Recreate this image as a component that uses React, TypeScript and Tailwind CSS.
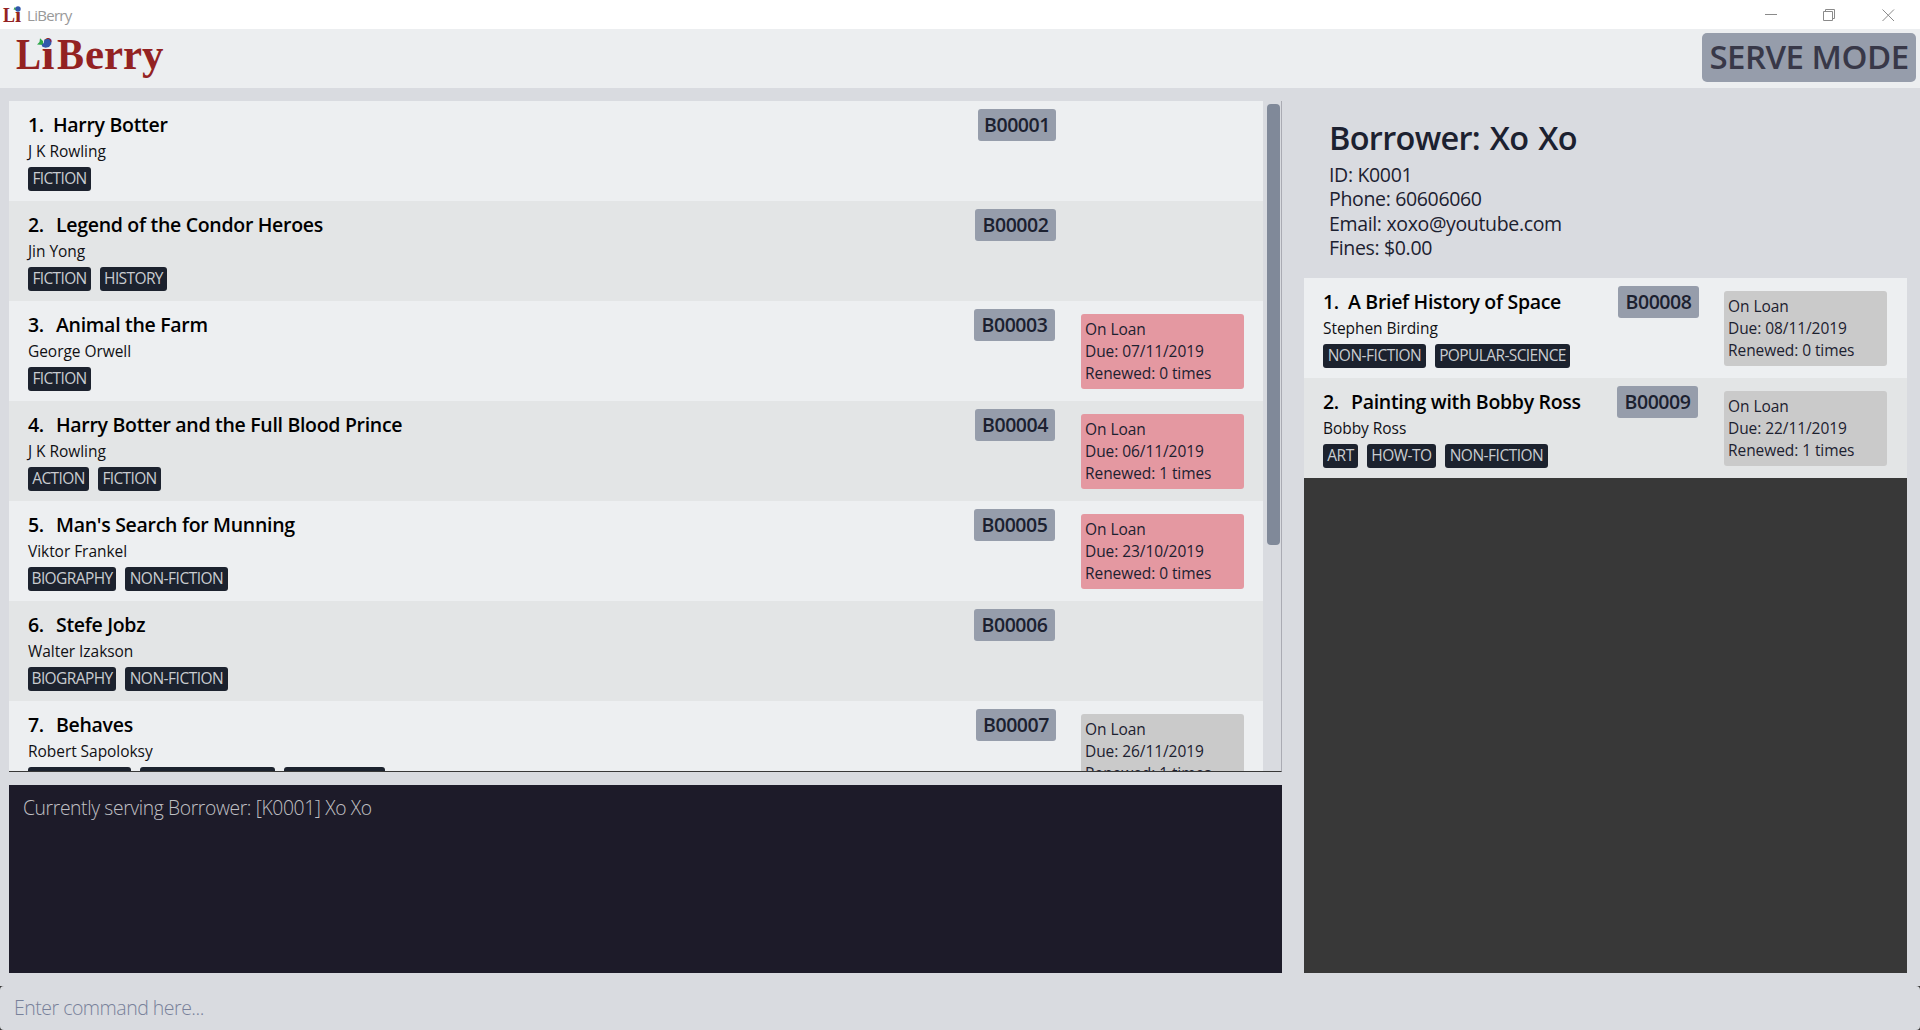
import React from "react";

type Loan = { due: string; renewed: number; overdue?: boolean };
type Book = {
  title: string;
  author: string;
  tags: string[];
  code: string;
  codeClass: string;
  loan?: Loan;
};

const TAG_WIDTH: Record<string, string> = {
  FICTION: "w-[63px] tracking-[-0.65px]",
  HISTORY: "w-[67px] tracking-[-0.6px]",
  ACTION: "w-[61px] tracking-[-0.6px]",
  BIOGRAPHY: "w-[88px] tracking-[-0.6px]",
  "NON-FICTION": "w-[103px] tracking-[-0.5px]",
  "POPULAR-SCIENCE": "w-[135px] tracking-[-0.6px]",
  PSYCHOLOGY: "w-[101px] tracking-[-0.6px]",
  ART: "w-[35px] tracking-[-0.5px]",
  "HOW-TO": "w-[69px] tracking-[-0.5px]",
};

const books: Book[] = [
  { title: "Harry Botter", author: "J K Rowling", tags: ["FICTION"], code: "B00001", codeClass: "w-[78px] mr-[25px]" },
  { title: "Legend of the Condor Heroes", author: "Jin Yong", tags: ["FICTION", "HISTORY"], code: "B00002", codeClass: "w-[81px] mr-[25px]" },
  { title: "Animal the Farm", author: "George Orwell", tags: ["FICTION"], code: "B00003", codeClass: "w-[81px] mr-[26px]", loan: { due: "07/11/2019", renewed: 0, overdue: true } },
  { title: "Harry Botter and the Full Blood Prince", author: "J K Rowling", tags: ["ACTION", "FICTION"], code: "B00004", codeClass: "w-[80px] mr-[26px]", loan: { due: "06/11/2019", renewed: 1, overdue: true } },
  { title: "Man's Search for Munning", author: "Viktor Frankel", tags: ["BIOGRAPHY", "NON-FICTION"], code: "B00005", codeClass: "w-[81px] mr-[26px]", loan: { due: "23/10/2019", renewed: 0, overdue: true } },
  { title: "Stefe Jobz", author: "Walter Izakson", tags: ["BIOGRAPHY", "NON-FICTION"], code: "B00006", codeClass: "w-[81px] mr-[26px]" },
  { title: "Behaves", author: "Robert Sapoloksy", tags: ["NON-FICTION", "POPULAR-SCIENCE", "PSYCHOLOGY"], code: "B00007", codeClass: "w-[80px] mr-[25px]", loan: { due: "26/11/2019", renewed: 1 } },
];

const borrowed: Book[] = [
  { title: "A Brief History of Space", author: "Stephen Birding", tags: ["NON-FICTION", "POPULAR-SCIENCE"], code: "B00008", codeClass: "w-[81px] mr-[25px]", loan: { due: "08/11/2019", renewed: 0 } },
  { title: "Painting with Bobby Ross", author: "Bobby Ross", tags: ["ART", "HOW-TO", "NON-FICTION"], code: "B00009", codeClass: "w-[81px] mr-[26px]", loan: { due: "22/11/2019", renewed: 1 } },
];

function BookRow({ book, index, className = "pr-[19px]" }: { book: Book; index: number; className?: string }) {
  return (
    <li
      className={`flex h-[100px] shrink-0 items-start whitespace-nowrap pl-[19px] ${className} ${
        index % 2 === 0 ? "bg-[#edeff1]" : "bg-[#e3e5e6]"
      }`}
    >
      <div className="min-w-0 flex-1 pt-2.5">
        <h2 className="flex text-[19.5px] leading-[27px] font-semibold tracking-[-0.3px] text-black">
          <span className={index === 0 ? "w-[25px]" : "w-7"}>{index + 1}.</span>
          <span>{book.title}</span>
        </h2>
        <p className="mt-0.5 text-[15.5px] leading-[22px] tracking-[-0.05px] text-[#101014]">{book.author}</p>
        <div className="mt-[5px] flex gap-[9px]">
          {book.tags.map((tag) => (
            <span
              key={tag}
              className={`flex h-6 justify-center rounded-[3px] bg-[#1c222e] text-[15.5px] leading-[23px] text-[#c9ccd0] ${TAG_WIDTH[tag]}`}
            >
              {tag}
            </span>
          ))}
        </div>
      </div>
      <span
        className={`mt-2 h-8 shrink-0 rounded-[3px] bg-[#969dab] text-center text-[19.5px] leading-[32px] font-semibold tracking-[-0.45px] text-[#1c2130] ${book.codeClass}`}
      >
        {book.code}
      </span>
      <div className="mt-[13px] w-[163px] shrink-0">
        {book.loan && (
          <div
            className={`h-[75px] rounded-[3px] pt-1 pl-1 text-[15.5px] leading-[22px] tracking-[-0.07px] text-[#1c2130] ${
              book.loan.overdue ? "bg-[#e498a1]" : "bg-[#cacaca]"
            }`}
          >
            <p>On Loan</p>
            <p>Due: {book.loan.due}</p>
            <p>Renewed: {book.loan.renewed} times</p>
          </div>
        )}
      </div>
    </li>
  );
}

function Berry() {
  return (
    <>
      <path d="M37 44.5 L39.5 42 L40 38.3 L43 41 L43.3 45 Z" fill="#2fa84a" />
      <path
        d="M44.4 39.4 L48.8 38.8 L50.4 41 L51.4 44 L49 47 L45.6 47.8 L42.4 46.8 L41.6 44.8 L43.8 43 Z"
        fill="#3158ab"
      />
    </>
  );
}

export default function App() {
  return (
    <div className="flex h-[1030px] w-[1920px] flex-col overflow-hidden bg-[#d9dbe0] font-['Open_Sans',sans-serif]">
      <header className="flex h-[29px] shrink-0 items-center bg-white">
        <svg className="h-[29px] w-[27px]" viewBox="0 0 27 29">
          <text y="22" fontSize="22" className="fill-[#932222] font-['Liberation_Serif',serif] font-bold">
            <tspan x="3" textLength="12" lengthAdjust="spacingAndGlyphs">L</tspan>
            <tspan x="15">i</tspan>
          </text>
          <path d="M13.5 9.5 L15 6.8 L16.5 10 Z" fill="#2fa84a" />
          <circle cx="18" cy="9" r="2.7" fill="#3158ab" />
        </svg>
        <span className="text-[15px] leading-[22px] tracking-[-0.7px] text-[#999]">LiBerry</span>
        <div className="ml-auto flex items-center pr-[25px] text-[#8a8a8a]">
          <svg className="h-7 w-[130px]" viewBox="0 0 130 28" fill="none" stroke="currentColor">
            <path d="M0 13.5h12M58.5 10.5h9v9h-9zM60.5 10v-1.5h9v9h-2" />
            <path d="M117.5 8.5l11.5 11.5M129 8.5l-11.5 11.5" />
          </svg>
        </div>
      </header>

      <div className="flex h-[59px] shrink-0 items-start justify-between bg-[#eceef0] pr-1">
        <svg className="h-[59px] w-[180px]" viewBox="0 29 180 59">
          <text y="69" fontSize="45" className="fill-[#932222] font-['Liberation_Serif',serif] font-bold">
            <tspan x="16" textLength="25" lengthAdjust="spacingAndGlyphs">L</tspan>
            <tspan x="41.5" textLength="13" lengthAdjust="spacingAndGlyphs">i</tspan>
            <tspan x="57" textLength="27" lengthAdjust="spacingAndGlyphs">B</tspan>
            <tspan x="85" textLength="78.5" lengthAdjust="spacingAndGlyphs">erry</tspan>
          </text>
          <Berry />
        </svg>
        <div className="mt-1 h-[49px] w-[214px] rounded-[5px] bg-[#969dab] text-center text-[33px] leading-[47px] font-semibold tracking-[-0.5px] whitespace-nowrap text-[#383848]">
          SERVE MODE
        </div>
      </div>

      <main className="flex min-h-0 flex-1 gap-[22px] pt-[13px] pr-[13px] pl-[9px]">
        <section className="flex w-[1273px] flex-col gap-[13px]">
          <div className="flex h-[671px] border-r border-b border-r-[#aaabb3] border-b-[#383838]">
            <ul className="flex w-[1254px] flex-col overflow-hidden">
              {books.map((b, i) => (
                <BookRow key={b.code} book={b} index={i} />
              ))}
            </ul>
            <div className="flex-1 pt-[3px] pl-1">
              <div className="h-[441px] w-[13px] rounded-[4px] bg-[#808999]" />
            </div>
          </div>
          <div className="h-[188px] bg-[#1d1b29] pt-[9px] pl-3.5 text-[19.3px] leading-[27px] font-light tracking-[-0.37px] text-[#c0c0c4]">
            Currently serving Borrower: [K0001] Xo Xo
          </div>
        </section>

        <aside className="flex h-[872px] min-w-0 flex-1 flex-col">
          <div className="h-[177px] shrink-0 pt-[13px] pl-[25px] whitespace-nowrap text-[#1c2130]">
            <h1 className="text-[32.5px] leading-[47px] font-semibold tracking-[-0.7px] [word-spacing:2px]">Borrower: Xo Xo</h1>
            <div className="mt-0.5 text-[19.5px] leading-[24.33px] tracking-[-0.34px]">
              <p>ID: K0001</p>
              <p>Phone: 60606060</p>
              <p>Email: xoxo@youtube.com</p>
              <p>Fines: $0.00</p>
            </div>
          </div>
          <ul className="flex flex-1 flex-col bg-[#383838]">
            {borrowed.map((b, i) => (
              <BookRow key={b.code} book={b} index={i} className="pr-5" />
            ))}
          </ul>
        </aside>
      </main>

      <footer className="h-[44px] shrink-0 bg-[#383838]">
        <div className="h-full rounded-[4px] bg-[#d9dbe0] pt-2 pl-3.5 text-[19.5px] leading-[28px] font-light tracking-[-0.5px] text-[#78819a]">
          Enter command here...
        </div>
      </footer>
    </div>
  );
}
